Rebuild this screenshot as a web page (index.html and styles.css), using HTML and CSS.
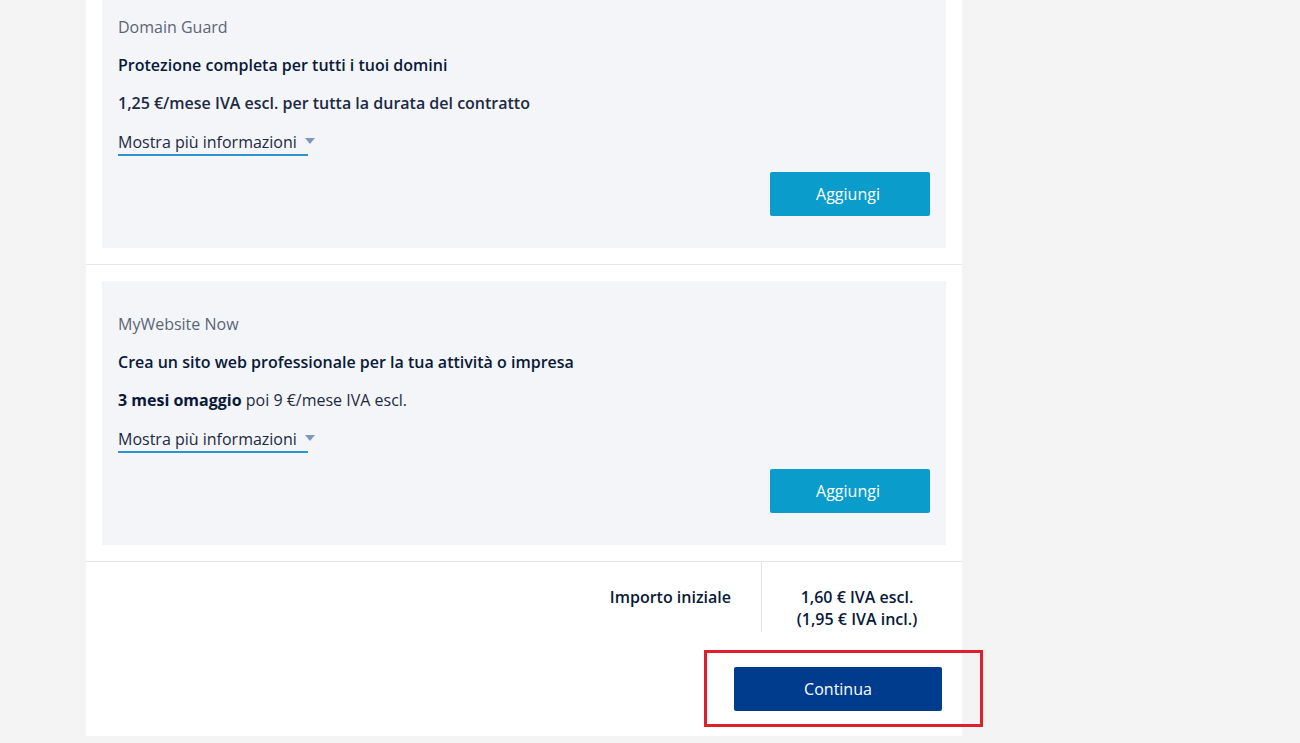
FILE: index.html
```html
<!DOCTYPE html>
<html lang="it">
<head>
<meta charset="utf-8">
<title>Carrello</title>
<link rel="stylesheet" href="styles.css">
</head>
<body>
<div class="page">
  <div class="panel">
    <section class="offer offer-first">
      <div class="card">
        <div class="card-label">Domain Guard</div>
        <div class="card-title">Protezione completa per tutti i tuoi domini</div>
        <div class="card-price semi">1,25 €/mese IVA escl. per tutta la durata del contratto</div>
        <div class="more-row"><a class="more">Mostra più informazioni <span class="caret"></span></a></div>
        <div class="actions"><button class="btn-add">Aggiungi</button></div>
      </div>
    </section>
    <section class="offer">
      <div class="card">
        <div class="card-label">MyWebsite Now</div>
        <div class="card-title">Crea un sito web professionale per la tua attività o impresa</div>
        <div class="card-price"><strong>3 mesi omaggio</strong> poi 9 €/mese IVA escl.</div>
        <div class="more-row"><a class="more">Mostra più informazioni <span class="caret"></span></a></div>
        <div class="actions"><button class="btn-add">Aggiungi</button></div>
      </div>
    </section>
    <div class="summary">
      <div class="sum-label">Importo iniziale</div>
      <div class="sum-value">1,60 € IVA escl.<br>(1,95 € IVA incl.)</div>
    </div>
    <div class="footer">
      <div class="continue-wrap">
        <button class="btn-continue">Continua</button>
        <span class="highlight"></span>
      </div>
    </div>
  </div>
</div>
</body>
</html>
```
FILE: styles.css
```css
* { box-sizing: border-box; }
html, body {
  margin: 0;
  padding: 0;
  background: #f4f4f5;
  font-family: "Open Sans", "Noto Sans", sans-serif;
  color: #0b1f3f;
}
.page {
  height: 743px;
  overflow: hidden;
  padding-left: 86px;
}
.panel {
  width: 876px;
  background: #ffffff;
  margin-top: -32px;
}
.offer {
  padding: 16px 16px 16px;
  border-bottom: 1px solid #e3e5e9;
}
.card {
  background: #f4f5f8;
  padding: 31px 16px 32px;
}
.card-label {
  font-size: 16px;
  line-height: 24px;
  color: #5b6577;
}
.card-title {
  margin-top: 14px;
  font-size: 16px;
  line-height: 24px;
  font-weight: 600;
  color: #081a38;
}
.card-price {
  margin-top: 14px;
  font-size: 16px;
  line-height: 24px;
  color: #1c2a44;
}
.card-price strong { font-weight: 700; color: #081a38; }
.card-price.semi { font-weight: 600; }
.more-row { margin-top: 15px; }
.more {
  display: inline-flex;
  align-items: center;
  gap: 8px;
  font-size: 16px;
  line-height: 24px;
  color: #1c2a44;
  border-bottom: 2px solid #2e95cc;
  cursor: pointer;
}
.caret {
  display: inline-block;
  width: 0;
  height: 0;
  border-left: 5.5px solid transparent;
  border-right: 5.5px solid transparent;
  border-top: 6px solid #7d97bf;
  margin-right: -7px;
  position: relative;
  top: -1px;
}
.actions {
  display: flex;
  justify-content: flex-end;
  margin-top: 16px;
}
.btn-add {
  width: 160px;
  height: 44px;
  border: none;
  border-radius: 2px;
  background: #0a9ccb;
  color: #ffffff;
  font-family: "Open Sans", "Noto Sans", sans-serif;
  font-size: 16px;
  padding: 0 4px 0 0;
}
.summary {
  display: flex;
  justify-content: flex-end;
  align-items: flex-start;
  padding-right: 10px;
}
.sum-label {
  font-size: 16px;
  font-weight: 600;
  line-height: 22px;
  padding: 24px 30px 0 0;
  color: #081a38;
}
.sum-value {
  width: 191px;
  border-left: 1px solid #e3e5e9;
  text-align: center;
  font-size: 16px;
  font-weight: 600;
  line-height: 22px;
  padding: 24px 0 2px;
  color: #081a38;
}
.footer {
  display: flex;
  justify-content: flex-end;
  padding: 35px 20px 25px;
}
.continue-wrap { position: relative; }
.btn-continue {
  display: block;
  width: 208px;
  height: 44px;
  border: none;
  border-radius: 2px;
  background: #003c8e;
  color: #ffffff;
  font-family: "Open Sans", "Noto Sans", sans-serif;
  font-size: 16px;
}
.highlight {
  position: absolute;
  left: -30px;
  top: -17px;
  width: 279px;
  height: 77px;
  border: 3px solid #e01f2d;
  pointer-events: none;
}
```
